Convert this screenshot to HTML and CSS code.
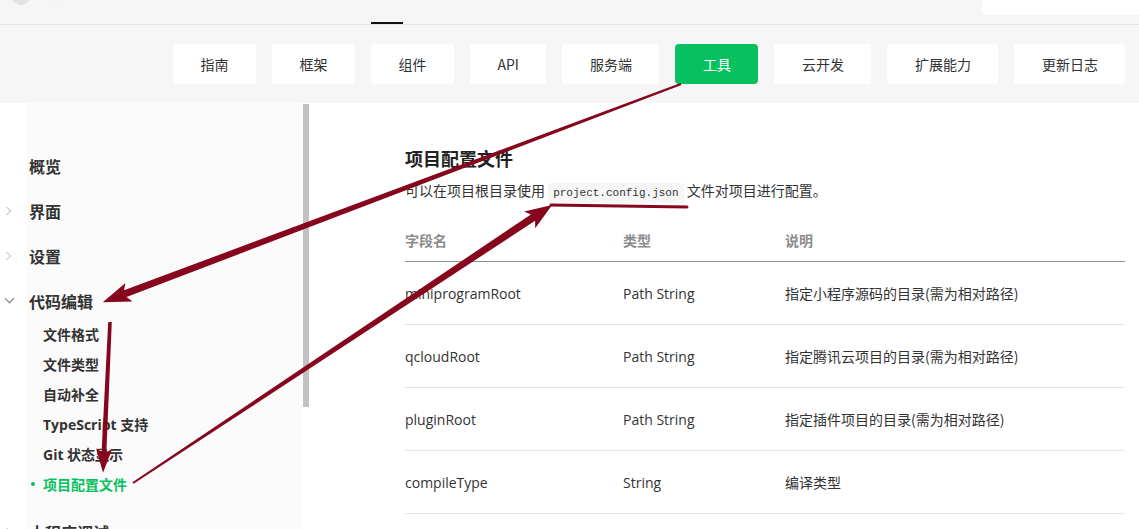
FILE: index.html
```html
<!DOCTYPE html>
<html lang="zh-CN">
<head>
<meta charset="utf-8">
<title>项目配置文件</title>
<link rel="stylesheet" href="styles.css">
</head>
<body>
<header class="topbar">
  <div class="logo"><span class="logo-mark"></span><span class="logo-text">微信开放文档</span></div>
  <div class="tab-active"></div>
  <div class="search"></div>
</header>
<nav class="navband">
  <a class="navbtn">指南</a>
  <a class="navbtn">框架</a>
  <a class="navbtn">组件</a>
  <a class="navbtn">API</a>
  <a class="navbtn">服务端</a>
  <a class="navbtn active">工具</a>
  <a class="navbtn">云开发</a>
  <a class="navbtn">扩展能力</a>
  <a class="navbtn">更新日志</a>
</nav>
<div class="main">
  <aside class="sidebar">
    <ul class="menu">
      <li class="item"><span class="gutter"></span>概览</li>
      <li class="item"><span class="gutter"><span class="chev"></span></span>界面</li>
      <li class="item"><span class="gutter"><span class="chev"></span></span>设置</li>
      <li class="item open"><span class="gutter"><span class="chev down"></span></span>代码编辑</li>
      <li>
        <ul class="sub">
          <li>文件格式</li>
          <li>文件类型</li>
          <li>自动补全</li>
          <li>TypeScript 支持</li>
          <li>Git 状态显示</li>
          <li class="active"><span class="dot"></span>项目配置文件</li>
        </ul>
      </li>
      <li class="item"><span class="gutter"><span class="chev"></span></span>小程序调试</li>
    </ul>
  </aside>
  <div class="scroll"><div class="thumb"></div></div>
  <section class="content">
    <h1>项目配置文件</h1>
    <p class="desc">可以在项目根目录使用 <code>project.config.json</code> 文件对项目进行配置。</p>
    <div class="table">
      <div class="row head"><span>字段名</span><span>类型</span><span>说明</span></div>
      <div class="row"><span>miniprogramRoot</span><span>Path String</span><span class="cn">指定小程序源码的目录(需为相对路径)</span></div>
      <div class="row"><span>qcloudRoot</span><span>Path String</span><span class="cn">指定腾讯云项目的目录(需为相对路径)</span></div>
      <div class="row"><span>pluginRoot</span><span>Path String</span><span class="cn">指定插件项目的目录(需为相对路径)</span></div>
      <div class="row"><span>compileType</span><span>String</span><span class="cn">编译类型</span></div>
    </div>
  </section>
</div>
<svg class="annot" width="1139" height="529" viewBox="0 0 1139 529">
  <g fill="#86061d">
    <polygon transform="translate(681 84) rotate(159.33)" points="0,-1.2 594,-3.6 590,-10 618,0 590,10 594,3.6 0,1.2"/>
    <polygon transform="translate(110 322) rotate(92.65)" points="0,-1.8 130,-2.4 127,-8 151,0 127,8 130,2.4 0,1.8"/>
    <polygon transform="translate(133 483) rotate(-33.56)" points="0,-1 480,-3.8 476,-10 503,0 476,10 480,3.8 0,1"/>
  </g>
  <line x1="551" y1="205" x2="687" y2="207" stroke="#86061d" stroke-width="3" stroke-linecap="round"/>
</svg>
</body>
</html>
```

FILE: styles.css
```css
* { box-sizing: border-box; }
html, body { margin: 0; padding: 0; }
body {
  width: 1139px;
  height: 529px;
  overflow: hidden;
  position: relative;
  background: #fff;
  color: #333;
  font-family: "Open Sans", "Noto Sans CJK SC", sans-serif;
}

/* top bar */
.topbar {
  height: 25px;
  background: #f6f6f6;
  border-bottom: 1px solid #e6e6e6;
  display: flex;
  overflow: hidden;
}
.logo {
  width: 371px;
  padding-left: 12px;
  display: flex;
  align-items: flex-start;
  gap: 10px;
}
.logo-mark {
  width: 18px;
  height: 18px;
  border-radius: 50%;
  background: #e2e2e2;
  margin-top: -13px;
}
.logo-text {
  font-family: "Noto Sans CJK SC", sans-serif;
  font-size: 12px;
  line-height: 16px;
  color: #b5b5b5;
  margin-top: -14px;
}
.tab-active {
  width: 32px;
  height: 2px;
  background: #111;
  align-self: flex-end;
}
.search {
  margin-left: auto;
  width: 157px;
  height: 15px;
  background: #fff;
  border-bottom-left-radius: 4px;
}

/* nav band */
.navband {
  height: 78px;
  background: #f6f6f6;
  padding: 19px 0 0 173px;
  display: flex;
  align-items: flex-start;
  gap: 16px;
}
.navbtn {
  height: 40px;
  padding: 0 27.5px;
  background: #fff;
  border-radius: 4px;
  font-family: "Noto Sans CJK SC", sans-serif;
  font-size: 14px;
  line-height: 40px;
  color: #333;
}
.navbtn.active {
  background: #07c160;
  color: #fff;
}

/* main */
.main {
  display: flex;
  height: 426px;
  overflow: hidden;
}
.sidebar {
  width: 303px;
  flex: none;
  background: linear-gradient(to right, #fff 27px, #fbfbfb 27px);
  padding-top: 40px;
}
.menu, .sub {
  list-style: none;
  margin: 0;
  padding: 0;
}
.item {
  height: 45px;
  display: flex;
  align-items: center;
  font-family: "Noto Sans CJK SC", sans-serif;
  font-size: 16px;
  font-weight: 700;
  color: #333;
}
.gutter {
  width: 29px;
  flex: none;
  display: flex;
  align-items: center;
  padding-left: 4px;
}
.chev {
  width: 6px;
  height: 6px;
  border-right: 1.3px solid #c4c4c4;
  border-bottom: 1.3px solid #c4c4c4;
  transform: rotate(-45deg);
}
.chev.down {
  width: 7px;
  height: 7px;
  margin-left: 2px;
  margin-top: -4px;
  border-color: #777;
  transform: rotate(45deg);
}
.sub {
  margin: -4px 0 10px;
}
.sub li {
  height: 30px;
  display: flex;
  align-items: center;
  padding-left: 43px;
  font-size: 14px;
  font-weight: 700;
  color: #333;
}
.sub li.active {
  color: #07c160;
  padding-left: 31px;
}
.dot {
  width: 4px;
  height: 4px;
  border-radius: 50%;
  background: #07c160;
  margin-right: 8px;
}

.scroll {
  width: 6px;
  flex: none;
}
.thumb {
  margin-top: 1px;
  height: 303px;
  background: #c1c1c1;
}

/* content */
.content {
  flex: 1;
  padding: 0 14px 0 96px;
}
h1 {
  margin: 42px 0 0;
  font-family: "Noto Sans CJK SC", sans-serif;
  font-size: 18px;
  line-height: 26px;
  font-weight: 700;
  color: #222;
}
.desc {
  margin: 8px 0 0;
  font-family: "Noto Sans CJK SC", sans-serif;
  font-size: 14px;
  line-height: 22px;
  color: #333;
}
code {
  display: inline-block;
  font-family: "Liberation Mono", monospace;
  font-size: 11px;
  line-height: 20px;
  padding: 0 5px;
  background: #f6f6f6;
  border-radius: 2px;
  color: #333;
}
.table {
  margin-top: 16px;
}
.row {
  display: grid;
  grid-template-columns: 218px 162px 1fr;
  align-items: center;
  height: 63px;
  border-bottom: 1px solid #e5e5e5;
  font-size: 14px;
  color: #333;
}
.row.head {
  height: 43px;
  border-bottom: 1px solid #8e8e8e;
  font-family: "Noto Sans CJK SC", sans-serif;
  font-weight: 700;
  color: #8c8c8c;
}
.cn {
  font-family: "Noto Sans CJK SC", sans-serif;
}

.annot {
  position: absolute;
  left: 0;
  top: 0;
  pointer-events: none;
}
```
